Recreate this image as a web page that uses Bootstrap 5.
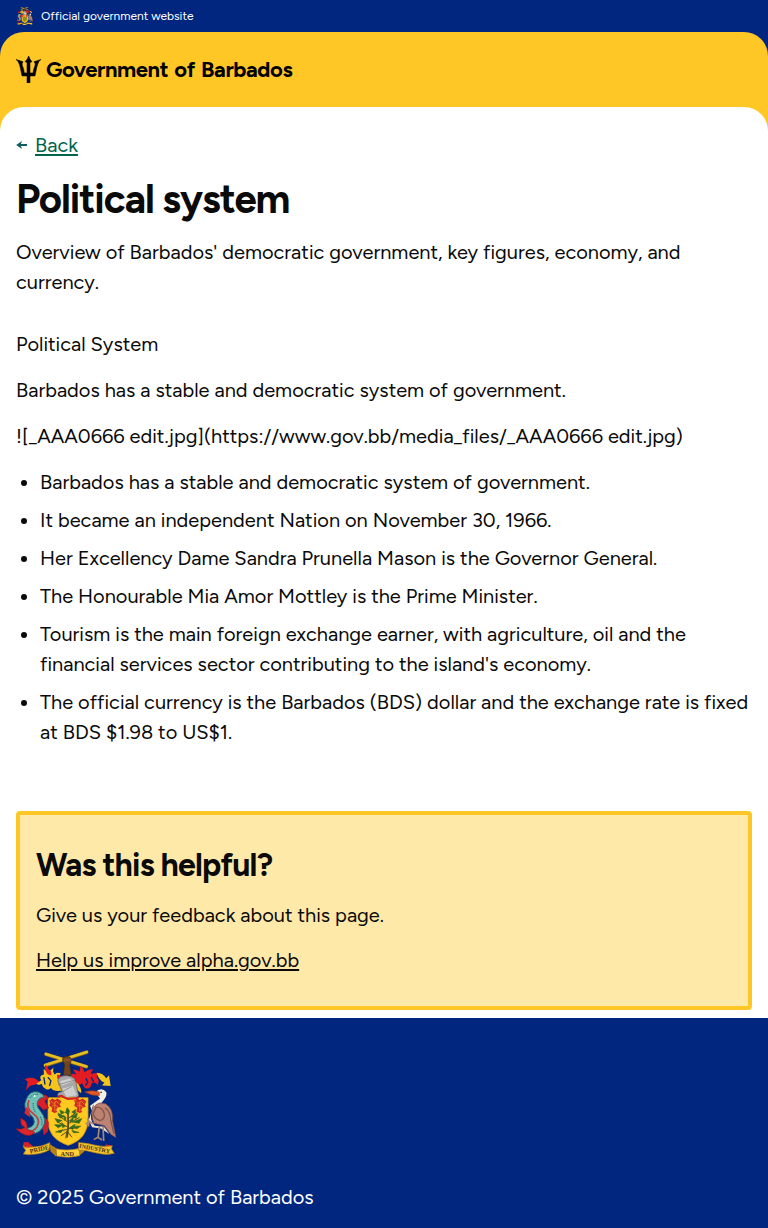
<!DOCTYPE html>
<html lang="en">
<head>
<meta charset="utf-8">
<meta name="viewport" content="width=device-width, initial-scale=1">
<title>Political system</title>
<link href="https://cdn.jsdelivr.net/npm/bootstrap@5.3.0/dist/css/bootstrap.min.css" rel="stylesheet">
<style>
body{font-family:Figtree,Lato,sans-serif;font-size:20px;line-height:30px;color:#0a0a0a;background:#fff}
.bg-navy{background:#00267f}
.bg-gold{background:#ffc726}
.official{height:32px;font-size:12px;line-height:16px}
.sheet{border-radius:24px 24px 0 0}
.brand-row{height:75px}
.brand-name{font-size:22px;line-height:28px;font-weight:700;color:#000;letter-spacing:-.42px;word-spacing:1.4px;margin-left:5px}
.back-row{padding-top:23px}
.back{color:#00654a}
.back:hover{color:#00452f}
.back,.help-link{text-decoration-thickness:2px;text-underline-offset:2px}
h1{font-size:40px;line-height:46px;font-weight:700;letter-spacing:-1px;margin:16px 0 15px}
h2{font-size:32px;line-height:40px;font-weight:700;letter-spacing:-.8px}
.bullets{padding-left:24px}
.bullets li+li{margin-top:8px}
.feedback{background:#ffe9a8;border:4px solid #ffc726;border-radius:4px;padding:30px 16px 31px;margin-top:64px}
.feedback h2,.feedback p{margin-bottom:15px}
.site-footer{height:210px;padding-top:32px}
</style>
</head>
<body>
<div class="bg-navy text-white official d-flex align-items-center px-3">
 <svg width="17" height="18" viewBox="18 30 302 327" class="me-2" aria-hidden="true"><use href="#crest"/></svg><span>Official government website</span>
</div>
<div class="bg-navy"><header class="bg-gold sheet brand-row d-flex align-items-center px-3">
 <svg width="25" height="27" viewBox="48 168 75 80" preserveAspectRatio="none" aria-hidden="true"><path d="M86 168q3 10 10 17l-6 2v31h9q1-11 6-22 2-6-3-11l21-7-6 6q-5 8-7 19l-5 24H90v22h-9v-22H66l-5-24q-2-11-7-19l-6-6 21 7q-4 5-2 11 5 11 6 22h8v-31l-6-2q8-7 11-17" stroke="#000" stroke-width="1.6"/></svg>
 <span class="brand-name">Government of Barbados</span>
</header></div>
<div class="bg-gold"><main class="bg-white sheet px-3 pb-2">
 <nav class="back-row d-flex align-items-center gap-2"><svg width="11" height="10" viewBox="0 0 11 10" aria-hidden="true"><path d="M.2 5 6 .9 4.9 4H11v2H4.9L6 9.1z" fill="#0b5e61"/></svg><a href="#" class="back">Back</a></nav>
 <h1>Political system</h1>
 <p class="mb-3 pb-3">Overview of Barbados' democratic government, key figures, economy, and currency.</p>
 <p class="mb-3">Political System</p>
 <p class="mb-3">Barbados has a stable and democratic system of government.</p>
 <p class="mb-3">![_AAA0666 edit.jpg](https://www.gov.bb/media_files/_AAA0666 edit.jpg)</p>
 <ul class="bullets mb-0">
  <li>Barbados has a stable and democratic system of government.</li>
  <li>It became an independent Nation on November 30, 1966.</li>
  <li>Her Excellency Dame Sandra Prunella Mason is the Governor General.</li>
  <li>The Honourable Mia Amor Mottley is the Prime Minister.</li>
  <li>Tourism is the main foreign exchange earner, with agriculture, oil and the financial services sector contributing to the island's economy.</li>
  <li>The official currency is the Barbados (BDS) dollar and the exchange rate is fixed at BDS $1.98 to US$1.</li>
 </ul>
 <section class="feedback"><h2>Was this helpful?</h2><p>Give us your feedback about this page.</p><a href="#" class="help-link text-reset">Help us improve alpha.gov.bb</a></section>
</main></div>
<footer class="bg-navy text-white site-footer px-3">
<svg width="101" height="108" viewBox="19 28 304 329" preserveAspectRatio="none" class="d-block mb-4" aria-hidden="true">
<g id="crest">
 <path d="M109 41 231 79M232 35 107 75" stroke="#8c6b18" stroke-width="11" stroke-linecap="round"/>
 <path d="M109 40 231 78M232 34 107 74" stroke="#e5bd22" stroke-width="8" stroke-linecap="round"/>
 <path d="M159 57q0-10 12-9 15-2 14 13l-4 15 5 29h-25l4-31z" fill="#704321" stroke="#38230f" stroke-width="2"/>
 <path d="M163 56h21M163 61h21" stroke="#a56a30" stroke-width="2"/>
 <path d="M152 152q-20 3-28-8-8 8-16 2-10-5-12-15-10 8-21-5 12 2 20-6-9-13 8-17 0-8-1-16l16 8 14-14q-4 14 4 22 4-9 18-4-9 11 0 17l14 14-6 22z" fill="#f6c51b"/>
 <path d="m116 112 8 10-4 14M103 112l3 20" fill="none" stroke="#00267f" stroke-width="4" stroke-linecap="round"/>
 <path d="m49 152 5-27-9-8q27-12 44 8l-14 10q-15-2-26 17M105 84l3-12q6 6 8 13 12 6 9 20-14-1-15-10zM143 103l25 7-3 15-22-10z" fill="#e31b23"/>
 <path d="M181 114q5-20 20-10-4-10-11-16 14-1 20 6 2-10 3-18 10 6 12 20 10-9 27-9-8 7-6 15 12-7 26-4-10 5-10 13 10 8 3 23-10-10-18-5-3 20-21 15l-8-14q-20 14-37-16z" fill="#e31b23"/>
 <path d="m230 115 5 12-6 8M246 112l6 12" fill="none" stroke="#00267f" stroke-width="4" stroke-linecap="round"/>
 <path d="M262 98q20 0 28 16l9-8 5 32-26-2 7-9q-15-4-23-29M184 116l20 13q13 13 11 31l-15-13z" fill="#f6c51b"/>
 <path d="M145 122q2-16 27-16 25 2 27 20l9 42-14 10h-37q-17-7-11-19l11-5z" fill="#a8a8a8" stroke="#555" stroke-width="2"/>
 <path d="m151 123 30-8 11 8-35 14zM158 146l32-9 12 29-31 5z" fill="#cfcfcf"/><path d="M145 134 195 120M154 157l32-17" stroke="#777" stroke-width="2"/>
 <path d="M115 173h121v65q0 61-60 81-61-20-61-77z" fill="#ffc91f" stroke="#b88414" stroke-width="2"/>
 <path d="M146 171q10-7 17 1l12 5 21-1 12-4" fill="none" stroke="#d81f26" stroke-width="6"/>
 <g id="flower"><path d="m119 182 10-6 7 4 8-4 12 8-5 10 3 8-11 1-3 9 4 5-9 3-9-5 2-11-9-6 3-8z" fill="#cf2c20"/><path d="m123 183 9 9 8-8 10 9M127 199l9-3 9 5M136 185v30" fill="none" stroke="#f49a24" stroke-width="2"/></g>
 <use href="#flower" x="75"/>
 <g fill="none" stroke="#55491d" stroke-linecap="round"><path d="M174 207q5 48-1 86" stroke-width="5"/><path d="m174 247-28-20m28 35-31-15m32 23-29 5m29-37 25-20m-25 35 34-19m-34 34 28-3m-31 12-17 12m17-12-3 19m4-20 14 17" stroke-width="3"/></g>
 <path d="m173 204 7 9-3 12-9-6zM165 218l-14-7 4 13zM187 217l12-8-3 14zM165 231l-20-11 6 15zM184 232l20-12-4 16zM158 243l-22-6 8 12zM189 247l28-10-8 14zM161 256l-26 0 11 9zM189 260l25 0-12 8zM160 271l-22 7 17 1zM187 273l22 6-17 1zM170 234l-8-7 5 17zM179 244l13-11-3 15zM167 261l-10-12 2 15zM180 265l17-11-7 16z" fill="#2f6b20" stroke="#3d6a20" stroke-width="2"/>
 <path d="M75 170l24-6 10 2 9 7-12 10 11 22-15 6-14-14-14-5z" fill="#d91f2c" stroke="#8d1720" stroke-width="2"/>
 <path d="M92 232q20 0 26 18l-3 26-12 12z" fill="#c3202b"/>
 <path d="M50 178q10-28 36-22 17 6 18 16-13-1-19 11-7 14 7 30 24 29 6 53-17 25-51 13l-8-11q34-2 35-21 0-13-13-23-24-19-11-46" fill="#6fc0b5" stroke="#276678" stroke-width="3"/>
 <path d="M58 181q-11 25 12 40 26 18 12 42-10 15-35 14" fill="none" stroke="#c33a40" stroke-width="5"/>
 <path d="M61 174q10-13 25-11M71 190q-2 16 8 29m13 13q8 13 4 25" fill="none" stroke="#356d89" stroke-width="4" stroke-dasharray="3 3"/>
 <circle cx="75" cy="168" r="3" fill="#fff"/>
 <path d="M76 279q-18 18-43 1l-14-12q20 3 27-3l-12-11-1-18q24 9 19 33z" fill="#df252e" stroke="#8d1720" stroke-width="2"/>
 <path d="M50 201l-6 20 18 13-2-17z" fill="#d52a31"/>
 <path d="M257 157q20-19 34 0 3 15-16 33l-26 28-7-20 30-22z" fill="#f3eee3"/>
 <path d="M226 156q22-8 43 0l1 10q-22 3-44-10" fill="#e75826" stroke="#8b3d23" stroke-width="2"/><circle cx="275" cy="157" r="2.5" fill="#222"/>
 <path d="M252 205q12-22 37-13 24 15 21 53l10 50-16-10-19-26-32-8q-11-29-1-56" fill="#bd8271" stroke="#67453f" stroke-width="2"/>
 <path d="M260 202q19 0 24 18t-12 23q-15-4-21-20zM287 204q17 13 17 38l10 42" fill="none" stroke="#81574d" stroke-width="4"/>
 <path d="M247 213q-8 29 9 46l28 3 16 22-25-17-27-4-10-22z" fill="#efdfce"/>
 <path d="m252 253-13-7-5-10m5 10-10 8m10-8-2 15M270 259l-4 35-13 7m13-7 12 8m3-40 2 43" fill="none" stroke="#a98873" stroke-width="5"/>
 <path d="M42 309l13-1 16 14-13 12-17-7zM306 318l-17-2-6 14 12 9 12-3z" fill="#d8202a"/>
 <path d="M120 314l23 15-3 24-17-16zM227 314l-22 14 4 22 15-12z" fill="#b68118"/>
 <path d="M40 319q6 8 20 5 35 0 61-14l-2 23q-26 14-63 14l-15-2 7-11z" fill="#f3c22f" stroke="#a97618" stroke-width="2"/>
 <path d="M140 329q31 7 69-1l2 22q-36 9-70 1z" fill="#ffd13a" stroke="#a97618" stroke-width="2"/>
 <path d="M207 310q26 1 51 8 24 6 51 2l-3 9 9 14q-27 7-58-2-28-8-50-8z" fill="#f3c22f" stroke="#a97618" stroke-width="2"/>
</g>
<g font-family="Liberation Serif,serif" font-weight="700" font-size="19" fill="#483413"><text x="62" y="343" transform="rotate(-13 62 343)">PRIDE</text><text x="153" y="350">AND</text><text x="209" y="326" font-size="18" transform="rotate(10 209 326)">INDUSTRY</text></g>
</svg>
<div>© 2025 Government of Barbados</div></footer>
<script src="https://cdn.jsdelivr.net/npm/bootstrap@5.3.0/dist/js/bootstrap.bundle.min.js"></script>
</body>
</html>
